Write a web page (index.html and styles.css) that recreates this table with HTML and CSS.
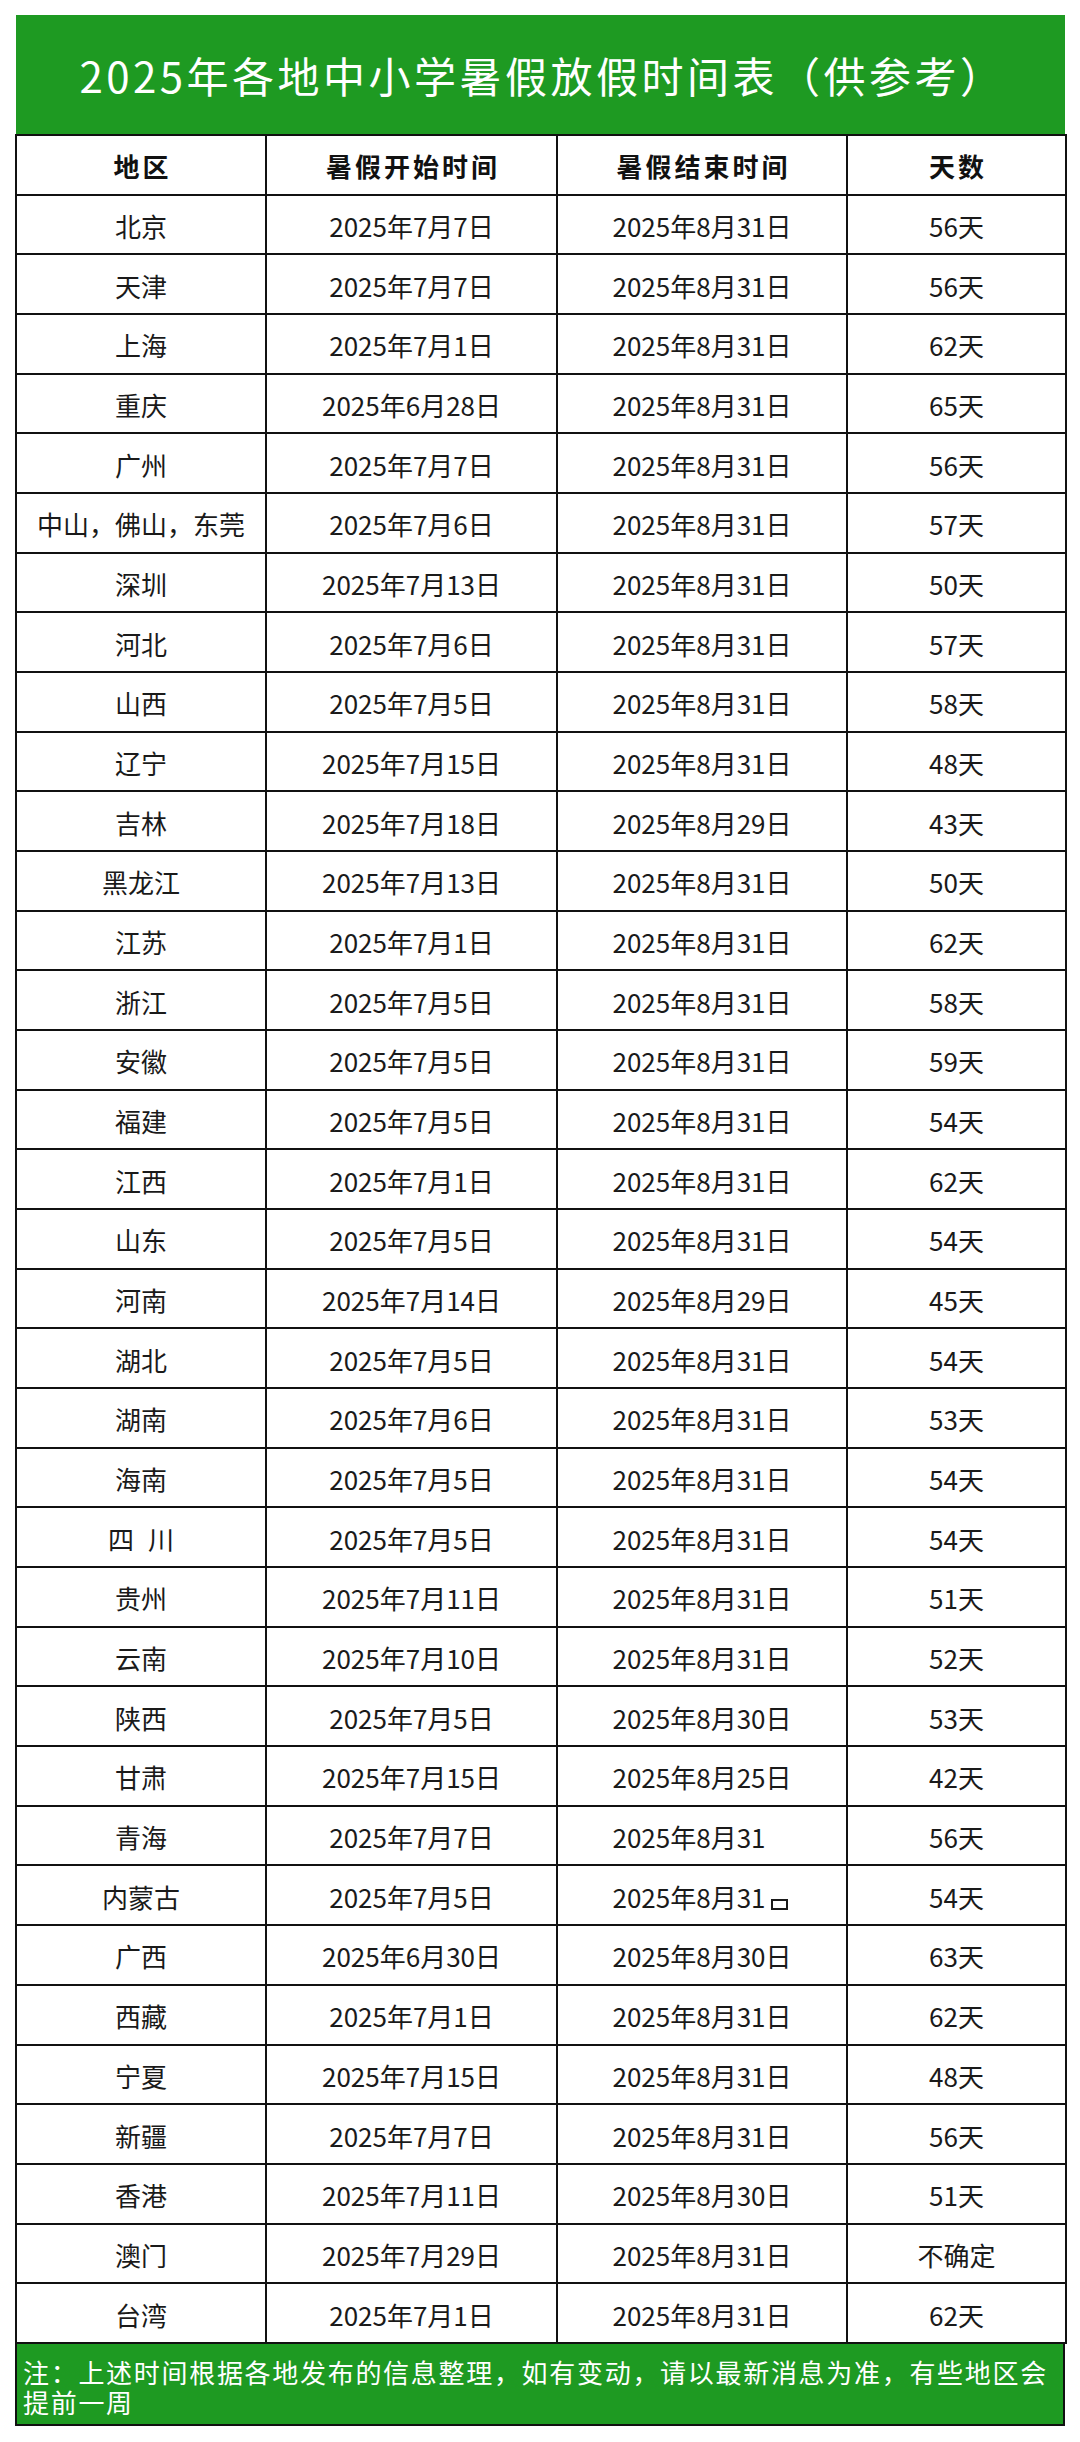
FILE: index.html
```html
<!DOCTYPE html>
<html lang="zh-CN">
<head>
<meta charset="utf-8">
<title>2025年各地中小学暑假放假时间表</title>
<link rel="stylesheet" href="styles.css">
</head>
<body>
<div class="sheet">
  <div class="title">2025年各地中小学暑假放假时间表（供参考）</div>
  <table class="grid">
    <colgroup>
      <col class="c1"><col class="c2"><col class="c3"><col class="c4">
    </colgroup>
    <thead>
      <tr><th>地区</th><th>暑假开始时间</th><th>暑假结束时间</th><th>天数</th></tr>
    </thead>
    <tbody>
      <tr><td>北京</td><td>2025年7月7日</td><td>2025年8月31日</td><td>56天</td></tr>
      <tr><td>天津</td><td>2025年7月7日</td><td>2025年8月31日</td><td>56天</td></tr>
      <tr><td>上海</td><td>2025年7月1日</td><td>2025年8月31日</td><td>62天</td></tr>
      <tr><td>重庆</td><td>2025年6月28日</td><td>2025年8月31日</td><td>65天</td></tr>
      <tr><td>广州</td><td>2025年7月7日</td><td>2025年8月31日</td><td>56天</td></tr>
      <tr><td>中山，佛山，东莞</td><td>2025年7月6日</td><td>2025年8月31日</td><td>57天</td></tr>
      <tr><td>深圳</td><td>2025年7月13日</td><td>2025年8月31日</td><td>50天</td></tr>
      <tr><td>河北</td><td>2025年7月6日</td><td>2025年8月31日</td><td>57天</td></tr>
      <tr><td>山西</td><td>2025年7月5日</td><td>2025年8月31日</td><td>58天</td></tr>
      <tr><td>辽宁</td><td>2025年7月15日</td><td>2025年8月31日</td><td>48天</td></tr>
      <tr><td>吉林</td><td>2025年7月18日</td><td>2025年8月29日</td><td>43天</td></tr>
      <tr><td>黑龙江</td><td>2025年7月13日</td><td>2025年8月31日</td><td>50天</td></tr>
      <tr><td>江苏</td><td>2025年7月1日</td><td>2025年8月31日</td><td>62天</td></tr>
      <tr><td>浙江</td><td>2025年7月5日</td><td>2025年8月31日</td><td>58天</td></tr>
      <tr><td>安徽</td><td>2025年7月5日</td><td>2025年8月31日</td><td>59天</td></tr>
      <tr><td>福建</td><td>2025年7月5日</td><td>2025年8月31日</td><td>54天</td></tr>
      <tr><td>江西</td><td>2025年7月1日</td><td>2025年8月31日</td><td>62天</td></tr>
      <tr><td>山东</td><td>2025年7月5日</td><td>2025年8月31日</td><td>54天</td></tr>
      <tr><td>河南</td><td>2025年7月14日</td><td>2025年8月29日</td><td>45天</td></tr>
      <tr><td>湖北</td><td>2025年7月5日</td><td>2025年8月31日</td><td>54天</td></tr>
      <tr><td>湖南</td><td>2025年7月6日</td><td>2025年8月31日</td><td>53天</td></tr>
      <tr><td>海南</td><td>2025年7月5日</td><td>2025年8月31日</td><td>54天</td></tr>
      <tr><td><span class="wide">四 川</span></td><td>2025年7月5日</td><td>2025年8月31日</td><td>54天</td></tr>
      <tr><td>贵州</td><td>2025年7月11日</td><td>2025年8月31日</td><td>51天</td></tr>
      <tr><td>云南</td><td>2025年7月10日</td><td>2025年8月31日</td><td>52天</td></tr>
      <tr><td>陕西</td><td>2025年7月5日</td><td>2025年8月30日</td><td>53天</td></tr>
      <tr><td>甘肃</td><td>2025年7月15日</td><td>2025年8月25日</td><td>42天</td></tr>
      <tr><td>青海</td><td>2025年7月7日</td><td>2025年8月31<span class="blank"></span></td><td>56天</td></tr>
      <tr><td>内蒙古</td><td>2025年7月5日</td><td>2025年8月31<span class="broken"></span></td><td>54天</td></tr>
      <tr><td>广西</td><td>2025年6月30日</td><td>2025年8月30日</td><td>63天</td></tr>
      <tr><td>西藏</td><td>2025年7月1日</td><td>2025年8月31日</td><td>62天</td></tr>
      <tr><td>宁夏</td><td>2025年7月15日</td><td>2025年8月31日</td><td>48天</td></tr>
      <tr><td>新疆</td><td>2025年7月7日</td><td>2025年8月31日</td><td>56天</td></tr>
      <tr><td>香港</td><td>2025年7月11日</td><td>2025年8月30日</td><td>51天</td></tr>
      <tr><td>澳门</td><td>2025年7月29日</td><td>2025年8月31日</td><td>不确定</td></tr>
      <tr><td>台湾</td><td>2025年7月1日</td><td>2025年8月31日</td><td>62天</td></tr>
    </tbody>
  </table>
  <div class="note">注：上述时间根据各地发布的信息整理，如有变动，请以最新消息为准，有些地区会提前一周</div>
</div>
</body>
</html>
```
FILE: styles.css
```css
html, body {
  margin: 0;
  padding: 0;
  background: #ffffff;
}

body {
  font-family: "Noto Sans CJK SC", "Noto Sans", sans-serif;
  color: #141414;
}

.sheet {
  width: 1049px;
  margin: 15px 0 0 16px;
}

.title {
  height: 119px;
  background: #1e9a22;
  color: #ffffff;
  font-size: 42px;
  letter-spacing: 3.5px;
  display: flex;
  align-items: center;
  justify-content: center;
  padding-left: 4px;
  box-sizing: border-box;
  line-height: 1;
}

.grid {
  width: 1050px;
  margin-left: -1px;
  border-collapse: collapse;
  table-layout: fixed;
  border: 2px solid #111111;
}

.c1 { width: 250px; }
.c2 { width: 291px; }
.c3 { width: 290px; }
.c4 { width: 219px; }

.grid th,
.grid td {
  border: 2px solid #111111;
  height: 59.68px;
  padding: 3px 0 0 0;
  text-align: center;
  vertical-align: middle;
  font-size: 26px;
  line-height: 30px;
  white-space: nowrap;
  box-sizing: border-box;
}

.grid th {
  font-weight: 700;
  letter-spacing: 3px;
  padding-left: 3px;
  color: #111111;
}

.grid td {
  font-weight: 400;
  color: #1a1a1a;
}

.wide {
  word-spacing: 8px;
}

.blank {
  display: inline-block;
  width: 26px;
}

.broken {
  display: inline-block;
  box-sizing: border-box;
  width: 17px;
  height: 11px;
  margin: 0 4px 0 5px;
  border: 2px solid #1a1a1a;
  vertical-align: -2px;
}

.note {
  background: #1e9a22;
  color: #ffffff;
  border: 2px solid #111111;
  border-top: none;
  margin-left: -1px;
  width: 1050px;
  box-sizing: border-box;
  padding: 13px 4px 7px 6px;
  font-size: 26px;
  letter-spacing: 1.7px;
  line-height: 30px;
}
```
